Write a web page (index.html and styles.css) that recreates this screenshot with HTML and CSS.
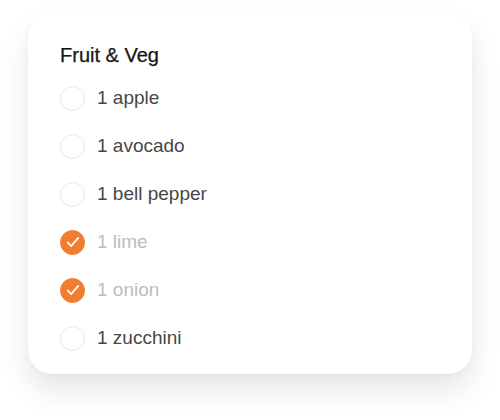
FILE: index.html
```html
<!DOCTYPE html>
<html>
<head>
<meta charset="utf-8">
<link rel="stylesheet" href="styles.css">
</head>
<body>
<div class="card">
  <h2 class="title">Fruit &amp; Veg</h2>
  <ul class="list">
    <li class="item"><span class="box"></span><span class="label">1 apple</span></li>
    <li class="item"><span class="box"></span><span class="label">1 avocado</span></li>
    <li class="item"><span class="box"></span><span class="label">1 bell pepper</span></li>
    <li class="item done"><span class="box"><svg viewBox="0 0 24 24" width="18" height="18"><path d="M5 12.5l4.5 5L19 6.5" fill="none" stroke="#fff" stroke-width="2.3" stroke-linecap="round" stroke-linejoin="round"/></svg></span><span class="label">1 lime</span></li>
    <li class="item done"><span class="box"><svg viewBox="0 0 24 24" width="18" height="18"><path d="M5 12.5l4.5 5L19 6.5" fill="none" stroke="#fff" stroke-width="2.3" stroke-linecap="round" stroke-linejoin="round"/></svg></span><span class="label">1 onion</span></li>
    <li class="item"><span class="box"></span><span class="label">1 zucchini</span></li>
  </ul>
</div>
</body>
</html>
```

FILE: styles.css
```css
html, body {
  margin: 0;
  background: #fff;
}
body {
  min-height: 420px;
  box-sizing: border-box;
  padding: 13px 28px 0 28px;
  font-family: "Liberation Sans", Arial, sans-serif;
}
.card {
  width: 444px;
  box-sizing: border-box;
  height: 361px;
  background: #fff;
  border-radius: 24px;
  box-shadow: 0 16px 30px rgba(0, 0, 0, 0.1), 0 2px 6px rgba(0, 0, 0, 0.03);
  padding: 30px 32px 12px 32px;
}
.title {
  margin: 0;
  font-size: 20px;
  line-height: 24px;
  font-weight: normal;
  color: #161616;
  -webkit-text-stroke: 0.25px #161616;
}
.list {
  list-style: none;
  margin: 7px 0 0 0;
  padding: 0;
}
.item {
  height: 48px;
  display: flex;
  align-items: center;
  gap: 12px;
}
.box {
  width: 25px;
  height: 25px;
  box-sizing: border-box;
  border-radius: 50%;
  border: 1.5px solid #f2e6d4;
  display: flex;
  align-items: center;
  justify-content: center;
  flex: none;
}
.done .box {
  background: #f27d31;
  border-color: #f27d31;
}
.label {
  font-size: 19px;
  color: #474747;
}
.done .label {
  color: #bdbdbd;
}
```
